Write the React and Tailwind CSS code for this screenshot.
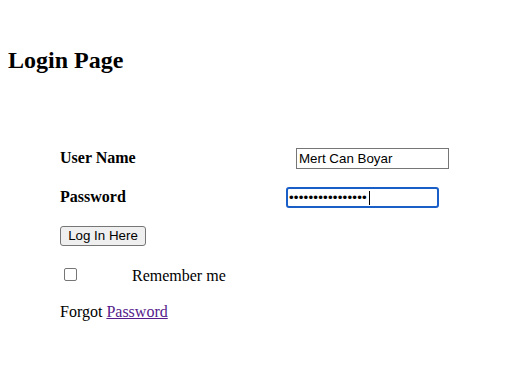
import React from "react";

export default function App() {
  return (
    <div className="min-h-[375px] w-[524px] bg-white text-black font-['Liberation_Serif','Times_New_Roman',serif] text-[16px] leading-[18px]">
      <h2 className="pl-[8px] pt-[46px] text-[24px] font-bold leading-[28px]">Login Page</h2>
      <div className="pl-[60px] pt-[74px] flex flex-col">
        <div className="flex items-start h-[21px]">
          <label className="w-[236px] pt-[1px] font-bold">User Name</label>
          <input
            type="text"
            readOnly
            defaultValue="Mert Can Boyar"
            className="w-[153px] h-[21px] border border-[#767676] px-[2px] text-[13.33px] font-['Liberation_Sans',Arial,sans-serif] outline-none"
          />
        </div>
        <div className="flex items-start h-[21px] mt-[18px]">
          <label className="w-[226px] pt-[1px] font-bold">Password</label>
          <div className="relative">
            <input
              type="password"
              readOnly
              defaultValue="mertcanboyar1234"
              className="w-[153px] h-[21px] border-2 border-[#1a5fc8] rounded-[3px] px-[1px] text-[13.33px] font-['Liberation_Sans',Arial,sans-serif] outline-none tracking-[0.2px]"
            />
            <span className="absolute left-[83px] top-[4px] w-[1px] h-[14px] bg-black" />
          </div>
        </div>
        <div className="mt-[18px]">
          <button className="w-[86px] h-[20px] border border-[#767676] rounded-[3px] bg-[#efefef] text-[13.33px] leading-[16px] font-['Liberation_Sans',Arial,sans-serif] text-black">
            Log In Here
          </button>
        </div>
        <div className="flex items-start mt-[21px] h-[18px]">
          <span className="ml-[4px] mt-[1px] w-[13px] h-[13px] border border-[#767676] rounded-[2px] bg-white" />
          <span className="ml-[55px] leading-[18px]">Remember me</span>
        </div>
        <div className="mt-[18px] leading-[18px]">
          Forgot <a href="#" className="text-[#551a8b] underline">Password</a>
        </div>
      </div>
    </div>
  );
}
